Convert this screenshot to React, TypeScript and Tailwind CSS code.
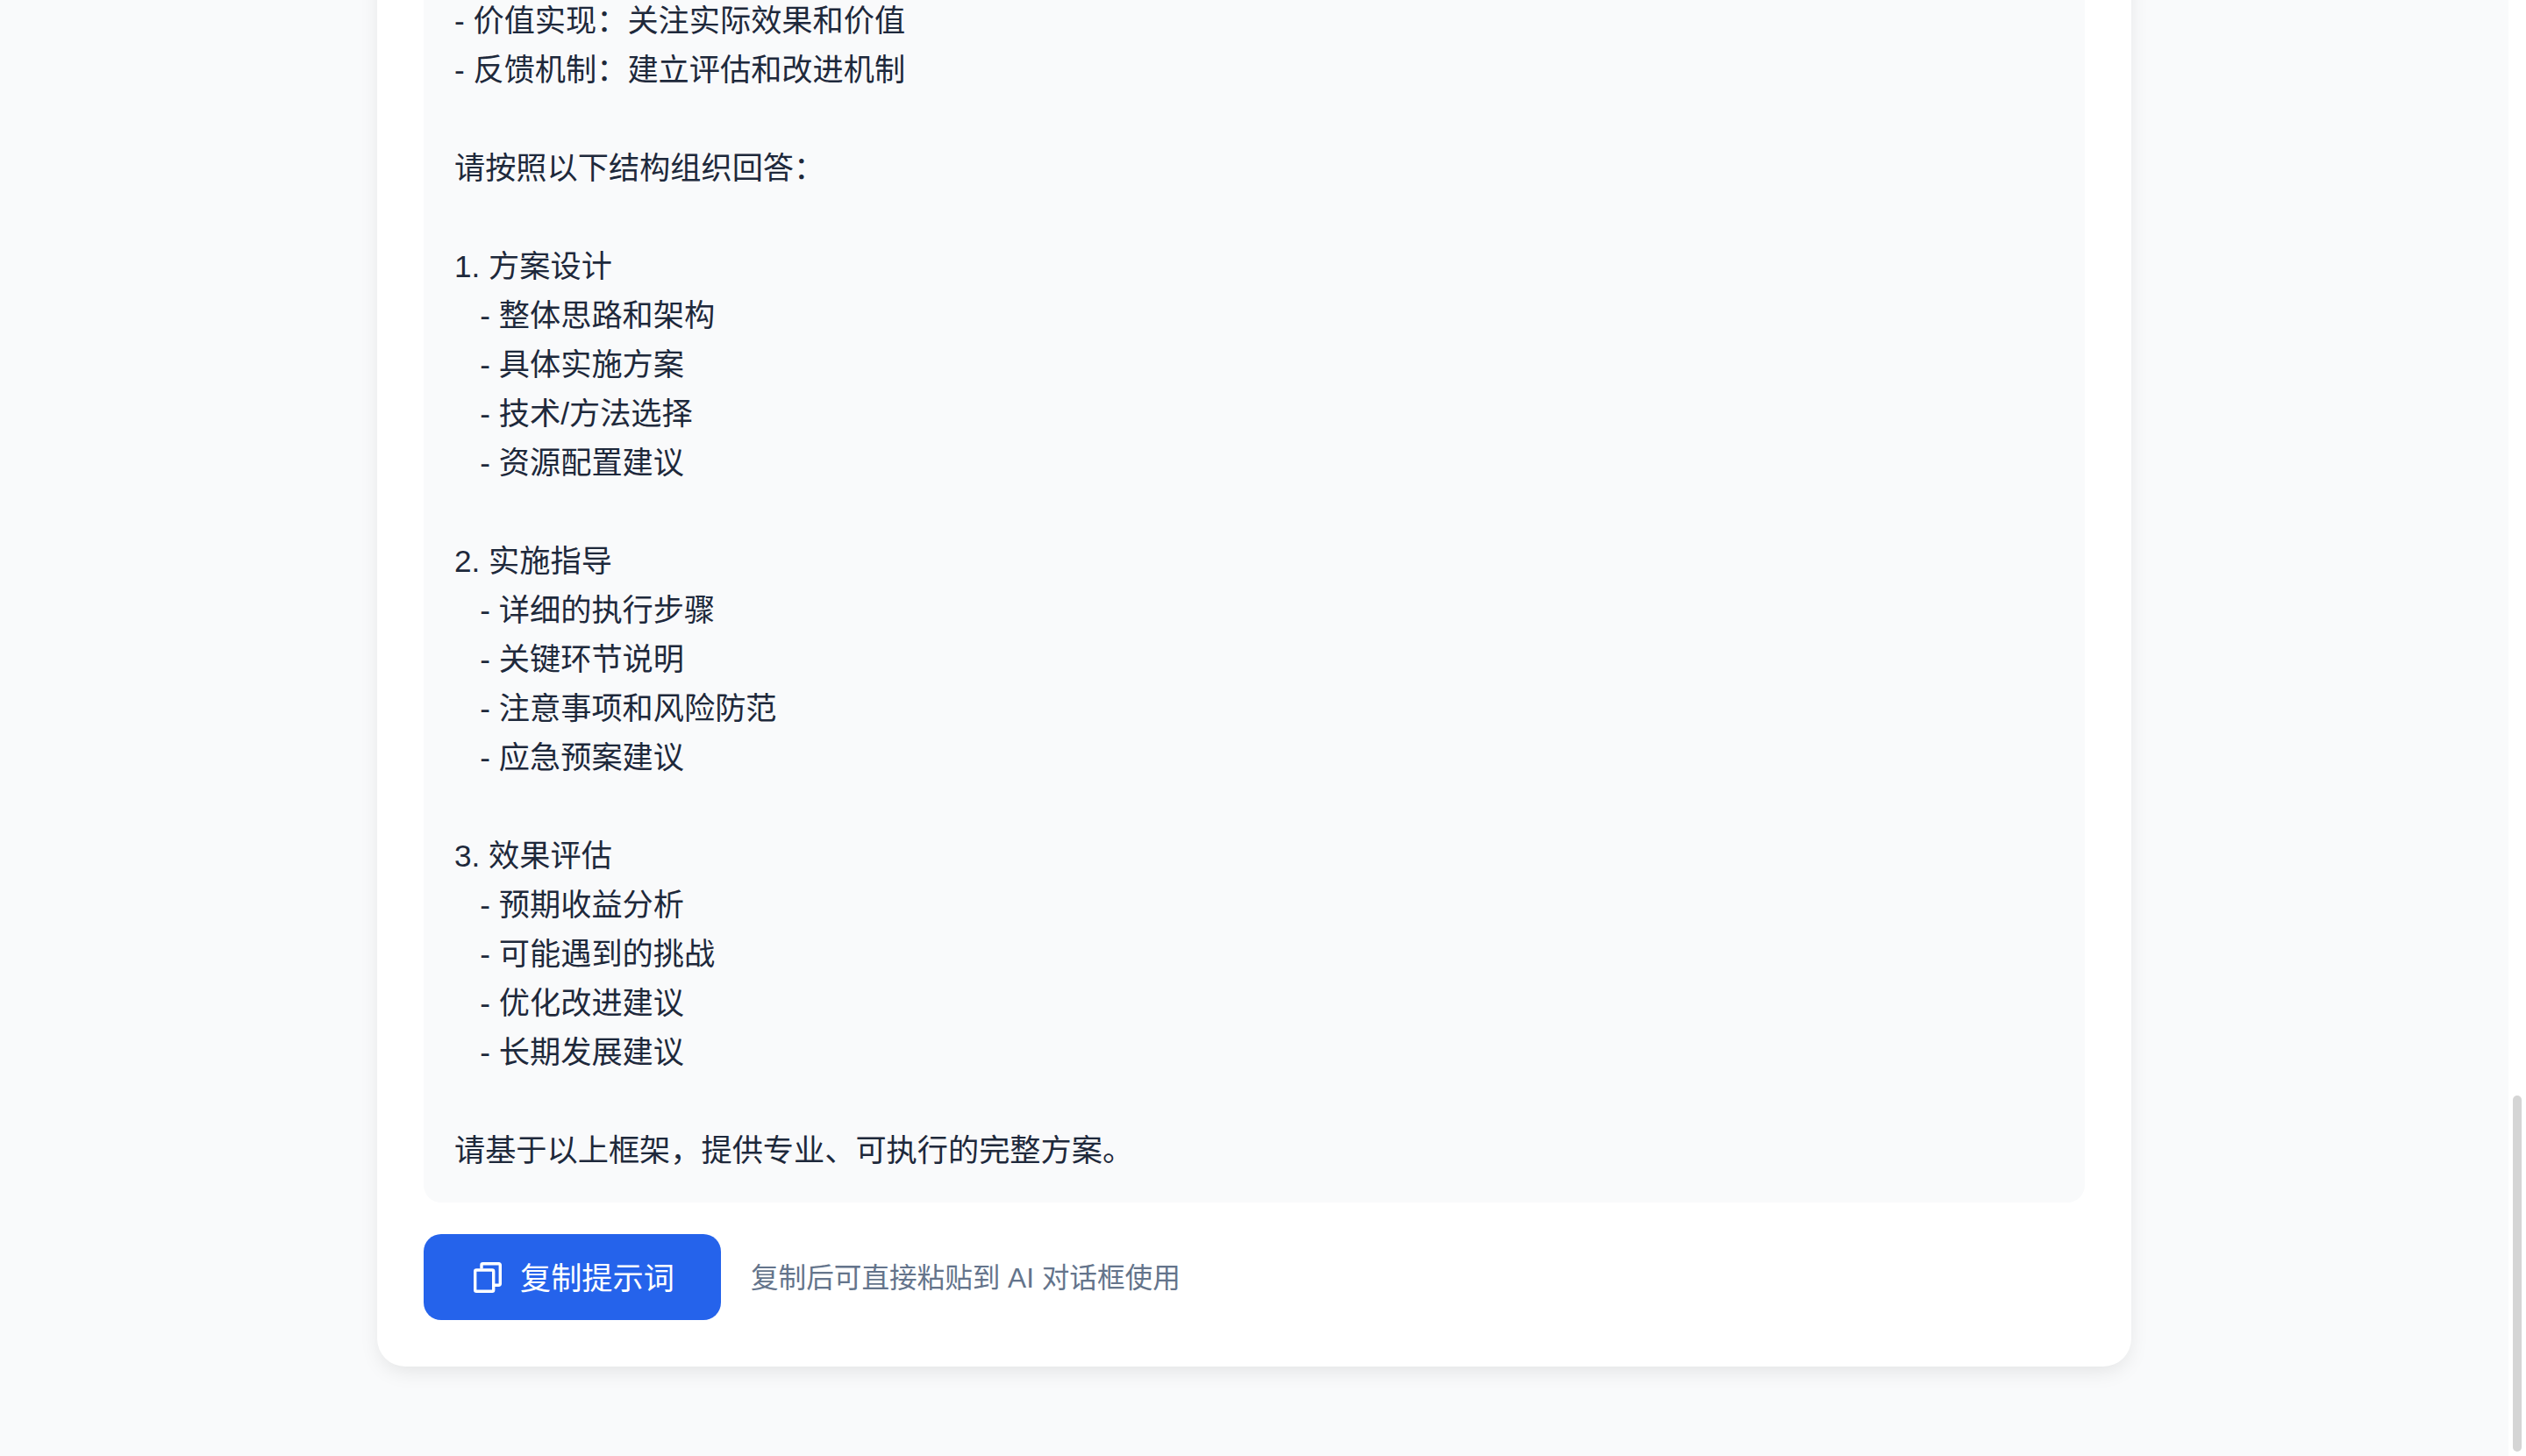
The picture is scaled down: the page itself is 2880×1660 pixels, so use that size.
import React from "react";

const promptText = `- 价值实现：关注实际效果和价值
- 反馈机制：建立评估和改进机制

请按照以下结构组织回答：

1. 方案设计
   - 整体思路和架构
   - 具体实施方案
   - 技术/方法选择
   - 资源配置建议

2. 实施指导
   - 详细的执行步骤
   - 关键环节说明
   - 注意事项和风险防范
   - 应急预案建议

3. 效果评估
   - 预期收益分析
   - 可能遇到的挑战
   - 优化改进建议
   - 长期发展建议

请基于以上框架，提供专业、可执行的完整方案。`;

const CopyIcon = () => (
  <svg width="32" height="35" viewBox="0 0 32 35" fill="none" stroke="currentColor" strokeWidth="3.4" className="flex-shrink-0">
    <rect x="1.7" y="9" width="21" height="24.3" rx="1.5" />
    <path d="M9 7.5V3.2a1.5 1.5 0 0 1 1.5-1.5h18.3a1.5 1.5 0 0 1 1.5 1.5v21.6a1.5 1.5 0 0 1-1.5 1.5H24" />
  </svg>
);

const App: React.FC = () => {
  return (
    <div className="flex h-[1660px] w-[2880px] overflow-hidden bg-white font-['Liberation_Sans','Noto_Sans_CJK_SC',sans-serif]">
      <main className="flex flex-1 justify-center bg-[#f9fafb]">
        <section className="-mt-[100px] w-[2000px] self-start rounded-[32px] bg-white px-[53px] pt-[40px] pb-[53px] shadow-[0_8px_24px_-4px_rgba(0,0,0,0.1)]">
          <div className="rounded-[20px] bg-[#f9fafb] px-[35px] pt-[56px] pb-[31px] text-[35.2px] leading-[56px] whitespace-pre-wrap text-[#1e293b]">
            {promptText}
          </div>
          <div className="mt-[36px] flex items-center gap-[34px]">
            <button className="flex h-[98px] w-[339px] items-center gap-[21px] rounded-[20px] bg-[#2563eb] pl-[57px] text-[35.2px] text-white">
              <CopyIcon />
              <span className="pt-[4px]">复制提示词</span>
            </button>
            <span className="pt-[4px] text-[31.6px] text-[#64748b]">复制后可直接粘贴到 AI 对话框使用</span>
          </div>
        </section>
      </main>
      <div className="w-5 bg-white">
        <div className="mt-[1249px] ml-[5px] h-[406px] w-[10px] rounded-[5px] bg-[#d5d5d5]" />
      </div>
    </div>
  );
};

export default App;
